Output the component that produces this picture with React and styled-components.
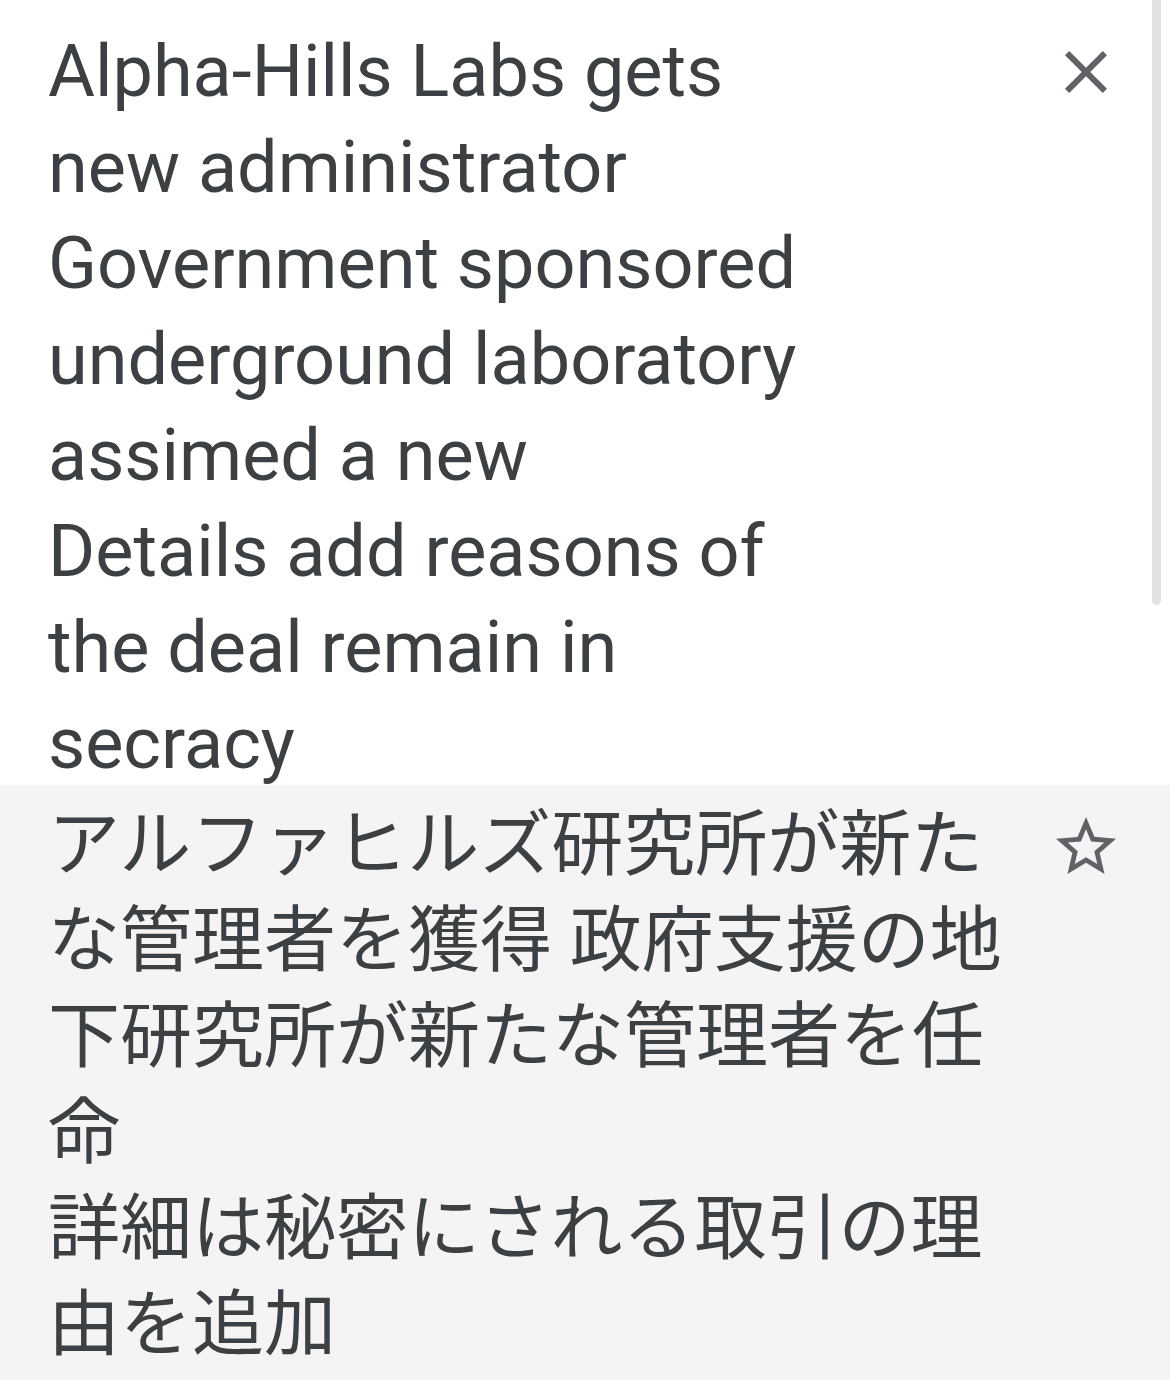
import React from 'react';
import styled, { createGlobalStyle } from 'styled-components';

const GlobalStyle = createGlobalStyle`
  html, body {
    margin: 0;
    padding: 0;
    background: #ffffff;
  }
  body {
    font-family: Roboto, "Noto Sans CJK JP", sans-serif;
    color: #3c4043;
  }
`;

const CloseIcon = () => (
  <svg viewBox="0 0 24 24" width="72" height="72" fill="#5f6368">
    <path d="M19 6.41L17.59 5 12 10.59 6.41 5 5 6.41 10.59 12 5 17.59 6.41 19 12 13.41 17.59 19 19 17.59 13.41 12z" />
  </svg>
);

const StarIcon = () => (
  <svg viewBox="0 0 24 24" width="72" height="72" fill="#5f6368">
    <path d="M22 9.24l-7.19-.62L12 2 9.19 8.63 2 9.24l5.46 4.73L5.82 21 12 17.27 18.18 21l-1.63-7.03L22 9.24zM12 15.4l-3.76 2.27 1-4.28-3.32-2.88 4.38-.38L12 6.1l1.71 4.04 4.38.38-3.32 2.88 1 4.28L12 15.4z" />
  </svg>
);

const App = () => {
  return (
    <Page>
      <GlobalStyle />
      <SourcePane>
        <Card $pad="24px 48px 24px 48px">
          <TextColumn>
            <Paragraph $maxWidth="760px">Alpha-Hills Labs gets new administrator</Paragraph>
            <Paragraph $maxWidth="760px">Government sponsored underground laboratory assimed a new</Paragraph>
            <Paragraph $maxWidth="760px">Details add reasons of the deal remain in secracy</Paragraph>
          </TextColumn>
          <IconButton $offset="12px" aria-label="close">
            <CloseIcon />
          </IconButton>
        </Card>
        {/* scroll position indicator */}
        <ScrollThumb style={{ height: `${Math.round((785 / 1018) * 785)}px` }} />
      </SourcePane>
      <TranslationPane>
        <Card $pad="12px 48px 24px 48px">
          <TextColumn lang="ja">
            <Paragraph>アルファヒルズ研究所が新たな管理者を獲得 政府支援の地下研究所が新たな管理者を任命</Paragraph>
            <Paragraph>詳細は秘密にされる取引の理由を追加</Paragraph>
          </TextColumn>
          <IconButton $offset="14px" aria-label="star">
            <StarIcon />
          </IconButton>
        </Card>
      </TranslationPane>
    </Page>
  );
};

const Page = styled.div`
  display: flex;
  flex-direction: column;
  min-height: 1380px;
  background: #f4f4f4;
`;

const SourcePane = styled.div`
  position: relative;
  height: 785px;
  overflow: hidden;
  background: #ffffff;
`;

const ScrollThumb = styled.div`
  position: absolute;
  top: 0;
  right: 9px;
  width: 9px;
  background: #e2e2e2;
  border-radius: 0 0 5px 5px;
`;

const TranslationPane = styled.div`
  flex: 1;
  background: #f4f4f4;
`;

const Card = styled.div`
  display: flex;
  align-items: flex-start;
  padding: ${props => props.$pad};
  box-sizing: border-box;
`;

const TextColumn = styled.div`
  flex: 1;
  min-width: 0;
  font-family: Roboto, "Noto Sans CJK JP", sans-serif;
  font-size: 72px;
  line-height: 96px;
  color: #3c4043;
`;

const Paragraph = styled.div`
  max-width: ${props => props.$maxWidth || 'none'};
  margin: 0;
`;

const IconButton = styled.div`
  flex: none;
  width: 72px;
  height: 72px;
  margin-top: ${props => props.$offset};
  display: flex;
  align-items: center;
  justify-content: center;
  cursor: pointer;
`;

export default App;
